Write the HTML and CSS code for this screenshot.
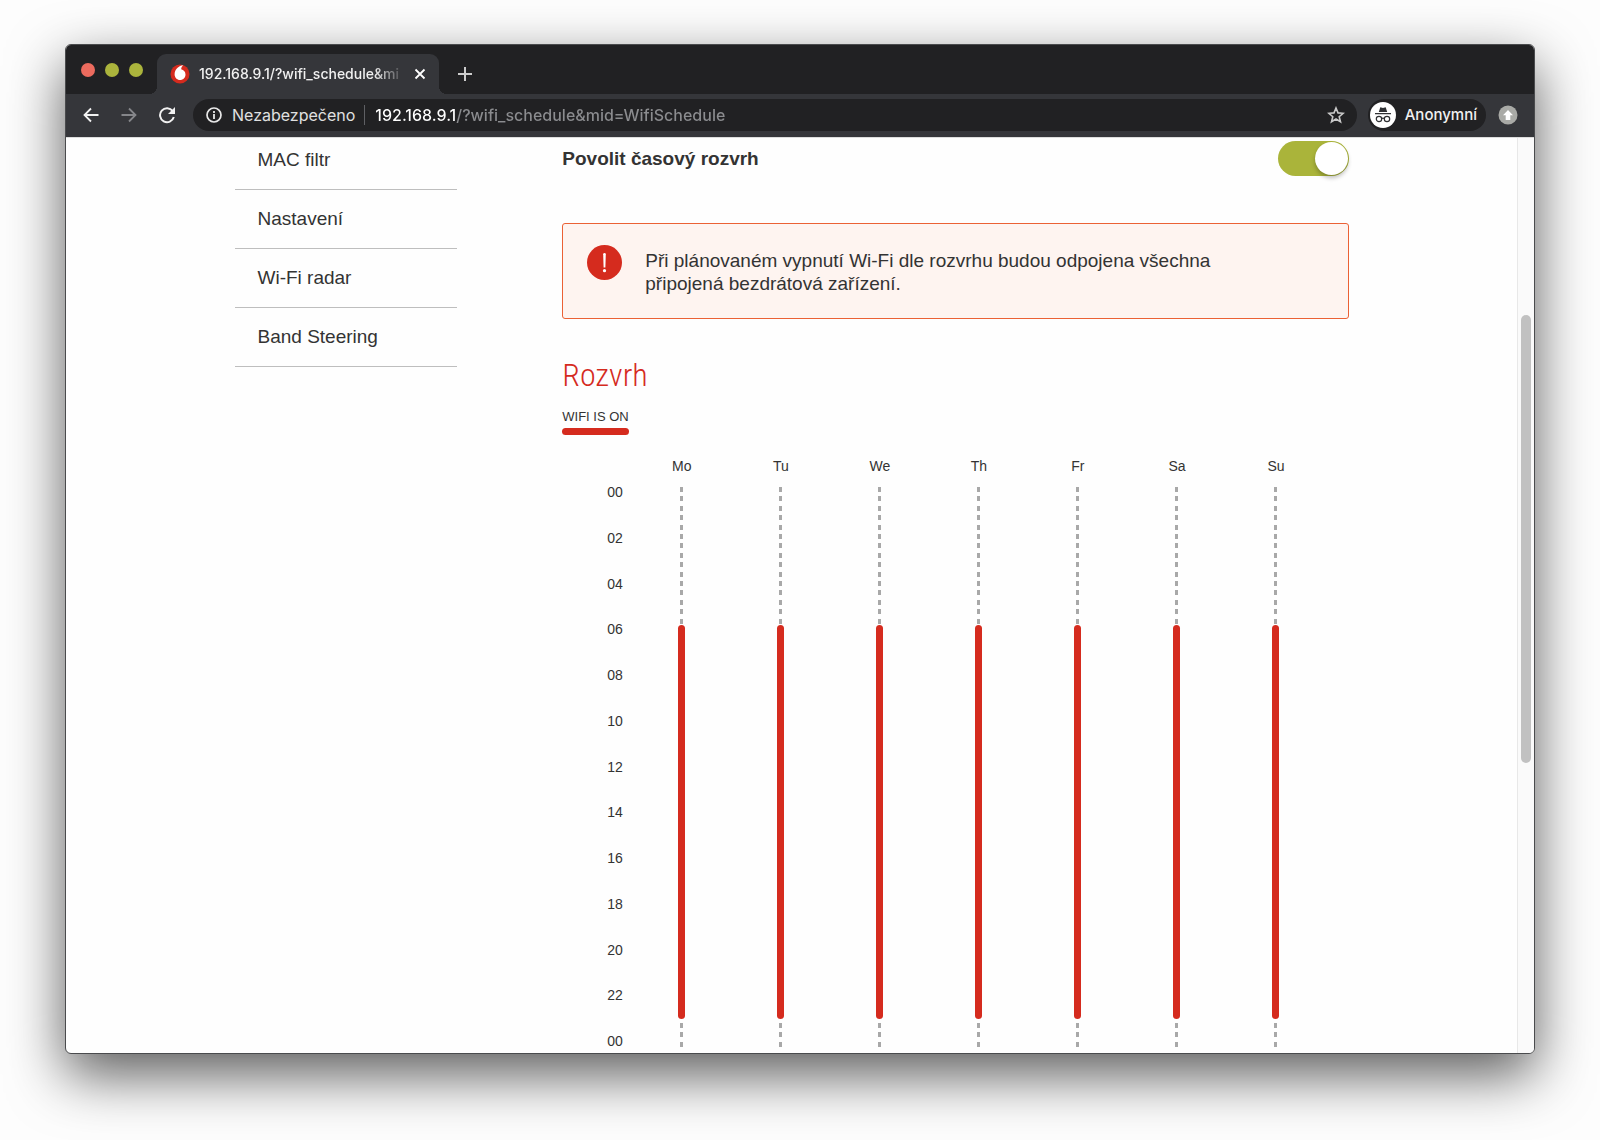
FILE: index.html
```html
<!DOCTYPE html>
<html lang="cs">
  <head>
    <meta charset="UTF-8" />
    <meta name="viewport" content="width=device-width, initial-scale=1.0" />
    <title>WifiSchedule</title>
    <link rel="stylesheet" href="styles.css">
  </head>
  <body>
    <div class="window">
      <header class="tabstrip">
        <div class="lights">
          <button class="light red" aria-label="Close window"></button>
          <button class="light" aria-label="Minimize window"></button>
          <button class="light" aria-label="Zoom window"></button>
        </div>
        <div class="tab">
          <svg class="favicon" viewBox="0 0 20 20" aria-hidden="true">
            <circle cx="10" cy="10" r="9.5" fill="#d52b1e" />
            <path d="M13.200 1.200C9 1.600 4.600 5 4.600 10.200c0 3.400 2.400 5.800 5.400 5.800s5.500-2.200 5.500-5.500c0-3-2-4.600-4.300-5.300 0-1.500.7-2.900 2-4z" fill="#fff" />
          </svg>
          <span class="tab-title">192.168.9.1/?wifi_schedule&amp;mi</span>
          <button class="icon-btn" aria-label="Close tab">
            <svg width="12" height="12" viewBox="0 0 12 12"><path d="M1.500 1.500l9 9M10.500 1.500l-9 9" stroke="#fff" stroke-width="1.800" /></svg>
          </button>
        </div>
        <button class="icon-btn new-tab" aria-label="New tab">
          <svg width="16" height="16" viewBox="0 0 16 16"><path d="M8 1v14M1 8h14" stroke="#ccc" stroke-width="2" /></svg>
        </button>
      </header>

      <div class="toolbar">
        <button class="icon-btn" aria-label="Back">
          <svg width="18" height="18" viewBox="0 0 18 18" fill="none" stroke="#f1f1f1" stroke-width="1.800"><path d="M16.500 9H3M9 2.500L2.500 9 9 15.500" /></svg>
        </button>
        <button class="icon-btn" aria-label="Forward">
          <svg width="18" height="18" viewBox="0 0 18 18" fill="none" stroke="#85868a" stroke-width="1.800"><path d="M1.500 9H15M9 2.500L15.500 9 9 15.500" /></svg>
        </button>
        <button class="icon-btn" aria-label="Reload">
          <svg width="18" height="18" viewBox="0 0 18 18"><path d="M14.700 5A7 7 0 1 0 15.800 11" fill="none" stroke="#f1f1f1" stroke-width="2" /><path d="M17 1v7h-7z" fill="#f1f1f1" /></svg>
        </button>
        <div class="omnibox">
          <svg width="18" height="18" viewBox="0 0 18 18" aria-hidden="true"><circle cx="9" cy="9" r="7" fill="none" stroke="#e8e8e8" stroke-width="1.700" /><path d="M9 8v5M9 5v2" stroke="#e8e8e8" stroke-width="1.800" /></svg>
          <label class="secure" for="url">Nezabezpečeno</label>
          <input class="url" id="url" type="text" value="192.168.9.1/?wifi_schedule&amp;mid=WifiSchedule" />
          <button class="icon-btn" aria-label="Bookmark">
            <svg width="18" height="18" viewBox="0 0 18 18"><path d="M9 2l2 4.900 5.200.4-4 3.400 1.300 5.100L9 13l-4.500 2.800 1.300-5.100-4-3.400L7 6.900z" fill="none" stroke="#c8c8c8" stroke-width="1.600" /></svg>
          </button>
        </div>
        <button class="profile">
          <svg width="26" height="26" viewBox="0 0 26 26" aria-hidden="true">
            <circle cx="13" cy="13" r="13" fill="#fff" />
            <path d="M8.800 10l1.500-4.800 2.700.7 2.700-.7L17.200 10z" fill="#303134" />
            <path d="M5 11.700h16" stroke="#303134" stroke-width="1.200" />
            <g fill="none" stroke="#303134" stroke-width="1.200"><circle cx="9" cy="17" r="2.700" /><circle cx="17" cy="17" r="2.700" /><path d="M11.700 16.600q1.300-.8 2.600 0" /></g>
          </svg>
          Anonymní
        </button>
        <button class="icon-btn update" aria-label="Update">
          <svg width="20" height="20" viewBox="0 0 20 20"><circle cx="10" cy="10" r="9.500" fill="#a9aaa6" /><path d="M10 5l5 5.300h-2.700V15H7.700v-4.700H5z" fill="#fff" /></svg>
        </button>
      </div>

      <div class="viewport">
        <div class="page">
          <nav class="sidebar">
            <ul>
              <li><a href="#">MAC filtr</a></li>
              <li><a href="#">Nastavení</a></li>
              <li><a href="#">Wi-Fi radar</a></li>
              <li><a href="#">Band Steering</a></li>
            </ul>
          </nav>

          <main class="content">
            <div class="setting">
              <label for="enable">Povolit časový rozvrh</label>
              <input class="toggle" id="enable" type="checkbox" checked />
            </div>

            <div class="alert">
              <svg width="35" height="35" viewBox="0 0 35 35" aria-hidden="true">
                <circle cx="17.500" cy="17.500" r="17.500" fill="#d52b1e" />
                <path d="M16.200 9.300a1.300 1.300 0 0 1 2.600 0l-.4 13.200h-1.800z" fill="#fff" />
                <circle cx="17.500" cy="25.700" r="1.600" fill="#fff" />
              </svg>
              <p>Při plánovaném vypnutí Wi-Fi dle rozvrhu budou odpojena všechna připojená bezdrátová zařízení.</p>
            </div>

            <h2>Rozvrh</h2>
            <div class="legend">WIFI IS ON</div>

            <div class="schedule">
              <div class="hours">
                <span>00</span>
                <span>02</span>
                <span>04</span>
                <span>06</span>
                <span>08</span>
                <span>10</span>
                <span>12</span>
                <span>14</span>
                <span>16</span>
                <span>18</span>
                <span>20</span>
                <span>22</span>
                <span>00</span>
              </div>
              <!-- one column per day, --from and --to are hours -->
              <div class="day"><span>Mo</span><div class="track"><div class="on" style="--from: 6; --to: 23"></div></div></div>
              <div class="day"><span>Tu</span><div class="track"><div class="on" style="--from: 6; --to: 23"></div></div></div>
              <div class="day"><span>We</span><div class="track"><div class="on" style="--from: 6; --to: 23"></div></div></div>
              <div class="day"><span>Th</span><div class="track"><div class="on" style="--from: 6; --to: 23"></div></div></div>
              <div class="day"><span>Fr</span><div class="track"><div class="on" style="--from: 6; --to: 23"></div></div></div>
              <div class="day"><span>Sa</span><div class="track"><div class="on" style="--from: 6; --to: 23"></div></div></div>
              <div class="day"><span>Su</span><div class="track"><div class="on" style="--from: 6; --to: 23"></div></div></div>
            </div>
          </main>
        </div>
        <div class="scrollbar"><div class="thumb"></div></div>
      </div>
    </div>
  </body>
</html>
```
FILE: styles.css
```css
* {
  box-sizing: border-box;
}

body {
  display: flex;
  flex-direction: column;
  min-height: 100vh;
  margin: 0;
  padding: 44px 65px 86px;
  background: #fdfdfd;
  color: #333;
  font-family: "Liberation Sans", Arial, sans-serif;
  font-size: 19px;
  line-height: 22px;
}

button {
  border: none;
  background: none;
  padding: 0;
  font: inherit;
  color: inherit;
}

/* Browser window */
.window {
  flex: 1;
  display: flex;
  flex-direction: column;
  border: 1px solid #4a4b4d;
  border-radius: 6px;
  overflow: hidden;
  background: #fefefe;
  box-shadow: 0 21px 56px rgba(0, 0, 0, 0.64);
}

.tabstrip {
  display: flex;
  align-items: flex-end;
  background: #212123;
  padding-top: 9px;
}

.lights {
  display: flex;
  gap: 10px;
  padding: 0 14px 17px 15px;
}

.light {
  width: 14px;
  height: 14px;
  border-radius: 50%;
  background: #abb43c;
}

.light.red {
  background: #ec6b5e;
}

.tab {
  position: relative;
  display: flex;
  align-items: center;
  gap: 9px;
  width: 282px;
  height: 40px;
  padding: 0 13px;
  background: #35363a;
  border-radius: 9px 9px 0 0;
  color: #f1f1f1;
  font-family: Inter, Roboto, sans-serif;
  font-size: 14px;
  font-weight: 500;
}

/* Rounded feet of the active tab */
.tab::before,
.tab::after {
  content: "";
  position: absolute;
  bottom: 0;
  width: 8px;
  height: 8px;
}

.tab::before {
  right: 100%;
  background: radial-gradient(circle at 0 0, #212123 8px, #35363a 8px);
}

.tab::after {
  left: 100%;
  background: radial-gradient(circle at 100% 0, #212123 8px, #35363a 8px);
}

.favicon {
  flex: none;
  width: 20px;
  height: 20px;
}

.tab-title {
  flex: 1;
  white-space: nowrap;
  -webkit-mask-image: linear-gradient(90deg, #000 85%, transparent);
  mask-image: linear-gradient(90deg, #000 85%, transparent);
}

.icon-btn {
  display: flex;
  align-items: center;
  justify-content: center;
}

.new-tab {
  margin: 0 18px 12px;
}

.toolbar {
  display: flex;
  align-items: center;
  gap: 20px;
  height: 43px;
  padding: 0 16px 2px;
  background: #35363a;
  color: #f1f1f1;
  font-family: Inter, Roboto, sans-serif;
  font-size: 16px;
}

.omnibox {
  flex: 1;
  display: flex;
  align-items: center;
  gap: 9px;
  height: 32px;
  margin: 0 -9px 0 -3px;
  padding: 0 12px;
  border-radius: 16px;
  background: #212123;
}

.secure {
  padding-right: 9px;
  border-right: 1px solid #5f6064;
  color: #e0e0e0;
  line-height: 20px;
}

/* Host is brighter than the rest of the address */
.url {
  flex: 1;
  border: none;
  outline: none;
  padding: 0 0 0 1px;
  font: inherit;
  font-weight: 500;
  background: linear-gradient(90deg, #fff 82px, #8b8c8f 82px);
  -webkit-background-clip: text;
  background-clip: text;
  color: transparent;
}

.profile {
  display: flex;
  align-items: center;
  gap: 9px;
  height: 32px;
  margin-right: -8px;
  padding: 0 9px 0 2px;
  border-radius: 16px;
  background: #212123;
  font-size: 15px;
  font-weight: 500;
}

/* Router page */
.viewport {
  flex: 1;
  display: flex;
  border-top: 1px solid #ddd;
}

.page {
  flex: 1;
  display: flex;
  gap: 105px;
  max-width: 1114px;
  margin: 0 auto;
}

.sidebar {
  width: 20%;
}

.sidebar ul {
  list-style: none;
  margin: 0;
  padding: 0;
}

.sidebar li {
  padding: 18px 23px;
  border-bottom: 1px solid #bebebe;
}

.sidebar li:first-child {
  padding-top: 11px;
}

.sidebar a {
  color: inherit;
  text-decoration: none;
}

.content {
  flex: 1;
  padding-top: 3px;
}

.setting {
  display: flex;
  align-items: center;
  justify-content: space-between;
  margin-bottom: 47px;
  font-weight: bold;
}

.toggle {
  appearance: none;
  display: flex;
  justify-content: flex-end;
  width: 71px;
  height: 35px;
  margin: 0;
  padding: 1px;
  border-radius: 18px;
  background: #aab43a;
}

.toggle::before {
  content: "";
  width: 33px;
  height: 33px;
  border-radius: 50%;
  background: #fff;
  box-shadow: 0 3px 4px rgba(0, 0, 0, 0.25);
}

.toggle:not(:checked) {
  justify-content: flex-start;
  background: #bebebe;
}

.alert {
  display: flex;
  align-items: flex-start;
  gap: 23px;
  padding: 21px 24px 23px;
  border: 1px solid #eb6135;
  border-radius: 3px;
  background: #fef4f0;
  line-height: 23px;
}

.alert svg {
  flex: none;
}

.alert p {
  margin: 0;
  padding: 4px 80px 0 0;
}

h2 {
  margin: 36px 0 14px;
  color: #d52b1e;
  font-family: "Roboto Condensed", Roboto, sans-serif;
  font-size: 32px;
  font-weight: 300;
  line-height: 40px;
}

.legend {
  width: fit-content;
  font-size: 13px;
  line-height: 16px;
}

.legend::after {
  content: "";
  display: block;
  height: 7px;
  margin-top: 3px;
  border-radius: 4px;
  background: #d52b1e;
}

.schedule {
  display: grid;
  grid-template-columns: 70px repeat(7, 1fr);
  margin-top: 23px;
  padding-right: 23px;
  font-size: 14px;
  line-height: 16px;
}

.hours {
  display: flex;
  flex-direction: column;
  justify-content: space-between;
  height: 591px;
  padding: 26px 0 0 45px;
}

.day {
  display: flex;
  flex-direction: column;
  align-items: center;
  gap: 12px;
}

.track {
  position: relative;
  width: 3px;
  height: 556px;
}

/* Dashed guide, runs a little past midnight */
.track::before {
  content: "";
  position: absolute;
  inset: 1px 0 -9px;
  background: repeating-linear-gradient(#a8a8a8 0, #a8a8a8 5px, transparent 5px, transparent calc(100% / 60));
}

.on {
  position: absolute;
  left: -2px;
  top: calc(var(--from) / 24 * 100%);
  width: 7px;
  height: calc((var(--to) - var(--from)) / 24 * 100%);
  border-radius: 4px;
  background: #d52b1e;
}

.scrollbar {
  display: grid;
  grid-template-rows: 177fr 449fr 291fr;
  width: 17px;
  padding: 0 3px;
  border-left: 1px solid #e8e8e8;
  background: #fafafa;
}

.thumb {
  grid-row: 2;
  border-radius: 5px;
  background: #c1c1c1;
}
```
